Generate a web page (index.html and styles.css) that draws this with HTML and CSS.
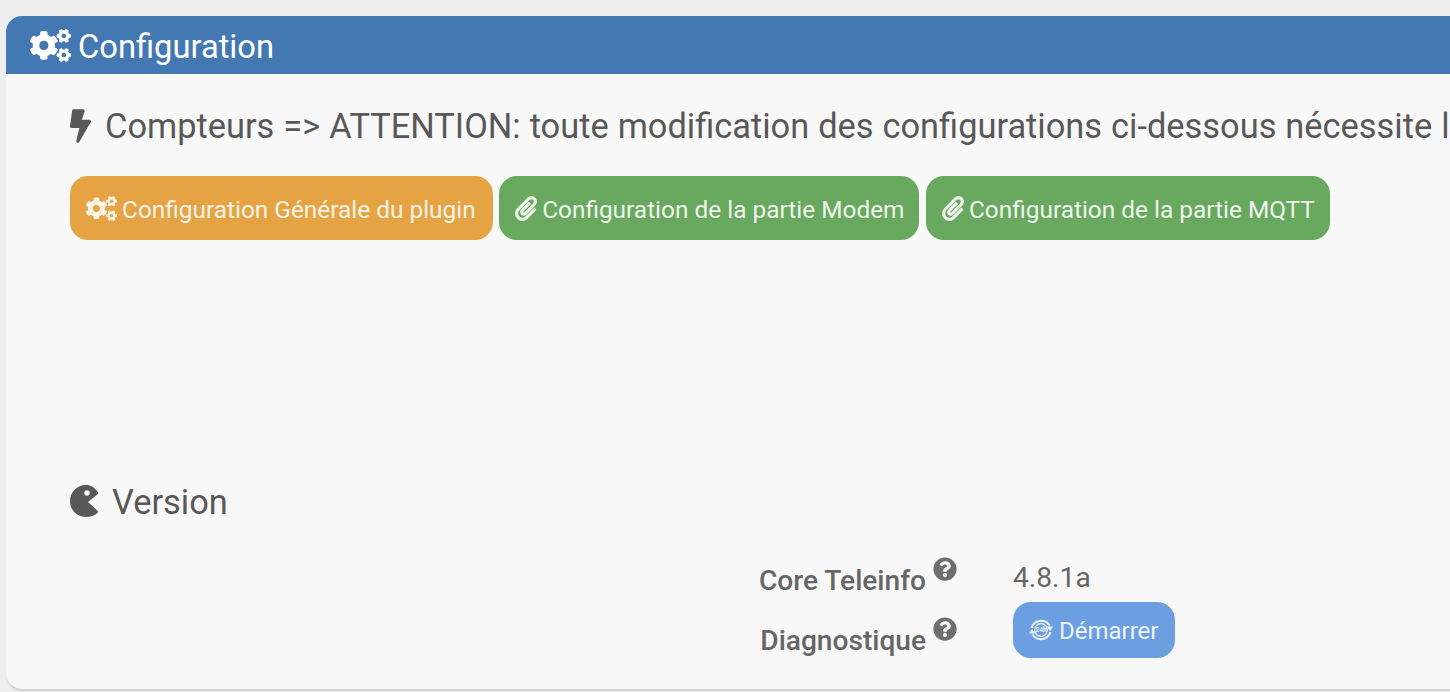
FILE: index.html
```html
<!DOCTYPE html>
<html lang="fr">
<head>
<meta charset="utf-8">
<title>Configuration</title>
<link rel="stylesheet" href="styles.css">
</head>
<body>
<svg class="defs" aria-hidden="true">
<symbol id="cogs" viewBox="0 0 640 512"><path d="M512.1 191l-8.2 14.3c-3 5.3-9.4 7.5-15.1 5.4-11.8-4.4-22.6-10.7-32.1-18.6-4.6-3.8-5.8-10.5-2.8-15.7l8.2-14.3c-6.9-8-12.3-17.3-15.9-27.4h-16.5c-6 0-11.2-4.3-12.2-10.3-2-12-2.1-24.6 0-37.1 1-6 6.2-10.4 12.2-10.4h16.5c3.6-10.1 9-19.4 15.9-27.4l-8.2-14.3c-3-5.2-1.9-11.9 2.8-15.7 9.5-7.9 20.4-14.2 32.1-18.6 5.7-2.1 12.1.1 15.1 5.4l8.2 14.3c10.5-1.9 21.2-1.9 31.7 0L552 6.3c3-5.3 9.4-7.5 15.1-5.4 11.8 4.4 22.6 10.7 32.1 18.6 4.6 3.8 5.8 10.5 2.8 15.7l-8.2 14.3c6.9 8 12.3 17.3 15.9 27.4h16.5c6 0 11.2 4.3 12.2 10.3 2 12 2.1 24.6 0 37.1-1 6-6.2 10.4-12.2 10.4h-16.5c-3.6 10.1-9 19.4-15.9 27.4l8.2 14.3c3 5.2 1.9 11.9-2.8 15.7-9.5 7.9-20.4 14.2-32.1 18.6-5.7 2.1-12.1-.1-15.1-5.4l-8.2-14.3c-10.4 1.9-21.2 1.9-31.7 0zm-10.5-58.8c38.5 29.6 82.4-14.3 52.8-52.8-38.5-29.7-82.4 14.3-52.8 52.8zM386.3 286.1l33.7 16.8c10.1 5.8 14.5 18.1 10.5 29.1-8.9 24.2-26.4 46.4-42.6 65.8-7.4 8.9-20.2 11.1-30.3 5.3l-29.1-16.8c-16 13.7-34.6 24.6-54.9 31.7v33.6c0 11.6-8.3 21.6-19.7 23.6-24.6 4.2-50.4 4.4-75.9 0-11.5-2-20-11.9-20-23.6V418c-20.3-7.2-38.9-18-54.9-31.7L74 403c-10 5.8-22.9 3.6-30.3-5.3-16.2-19.4-33.3-41.6-42.2-65.7-4-10.9.4-23.2 10.5-29.1l33.3-16.8c-3.9-20.9-3.9-42.4 0-63.4L12 205.8c-10.1-5.8-14.6-18.1-10.5-29 8.9-24.2 26-46.4 42.2-65.8 7.4-8.9 20.2-11.1 30.3-5.3l29.1 16.8c16-13.7 34.6-24.6 54.9-31.7V57.1c0-11.5 8.2-21.5 19.6-23.5 24.6-4.2 50.5-4.4 76-.1 11.5 2 20 11.9 20 23.6v33.6c20.3 7.2 38.9 18 54.9 31.7l29.1-16.8c10-5.8 22.9-3.6 30.3 5.3 16.2 19.4 33.2 41.6 42.1 65.8 4 10.9.1 23.2-10 29.1l-33.7 16.8c3.9 21 3.9 42.5 0 63.5zm-117.6 21.1c59.2-77-28.7-164.9-105.7-105.7-59.2 77 28.7 164.9 105.7 105.7zm243.4 182.7l-8.2 14.3c-3 5.3-9.4 7.5-15.1 5.4-11.8-4.4-22.6-10.7-32.1-18.6-4.6-3.8-5.8-10.5-2.8-15.7l8.2-14.3c-6.9-8-12.3-17.3-15.9-27.4h-16.5c-6 0-11.2-4.3-12.2-10.3-2-12-2.1-24.6 0-37.1 1-6 6.2-10.4 12.2-10.4h16.5c3.6-10.1 9-19.4 15.9-27.4l-8.2-14.3c-3-5.2-1.9-11.9 2.8-15.7 9.5-7.9 20.4-14.2 32.1-18.6 5.7-2.1 12.1.1 15.1 5.4l8.2 14.3c10.5-1.9 21.2-1.9 31.7 0l8.2-14.3c3-5.3 9.4-7.5 15.1-5.4 11.8 4.4 22.6 10.7 32.1 18.6 4.6 3.8 5.8 10.5 2.8 15.7l-8.2 14.3c6.9 8 12.3 17.3 15.9 27.4h16.5c6 0 11.2 4.3 12.2 10.3 2 12 2.1 24.6 0 37.1-1 6-6.2 10.4-12.2 10.4h-16.5c-3.6 10.1-9 19.4-15.9 27.4l8.2 14.3c3 5.2 1.9 11.9-2.8 15.7-9.5 7.9-20.4 14.2-32.1 18.6-5.7 2.1-12.1-.1-15.1-5.4l-8.2-14.3c-10.4 1.9-21.2 1.9-31.7 0zM501.6 431c38.5 29.6 82.4-14.3 52.8-52.8-38.5-29.6-82.4 14.3-52.8 52.8z"/></symbol>
<symbol id="clip" viewBox="0 0 448 512"><path d="M43.246 466.142c-58.43-60.289-57.341-157.511 1.386-217.581L254.392 34c44.316-45.332 116.351-45.336 160.671 0 43.89 44.894 43.943 117.329 0 162.276L232.214 383.128c-29.855 30.537-78.633 30.111-107.982-.998-28.275-29.97-27.368-77.473 1.452-106.953l143.743-146.835c6.182-6.314 16.312-6.422 22.626-.241l22.861 22.379c6.315 6.182 6.422 16.312.241 22.626L171.427 319.927c-4.932 5.045-5.236 13.428-.648 18.292 4.372 4.634 11.245 4.711 15.688.165l182.849-186.851c19.613-20.062 19.613-52.725-.011-72.798-19.189-19.627-49.957-19.637-69.154 0L90.39 293.295c-34.763 35.56-35.299 93.12-1.191 128.313 34.01 35.093 88.985 35.137 123.058.286l172.06-175.999c6.177-6.319 16.307-6.433 22.626-.256l22.877 22.364c6.319 6.177 6.434 16.307.256 22.626l-172.06 175.998c-59.576 60.938-155.943 60.216-214.77-.485z"/></symbol>
<symbol id="help" viewBox="0 0 512 512"><path d="M504 256c0 136.997-111.043 248-248 248S8 392.997 8 256C8 119.083 119.043 8 256 8s248 111.083 248 248zM262.655 90c-54.497 0-89.255 22.957-116.549 63.758-3.536 5.286-2.353 12.415 2.715 16.258l34.699 26.31c5.205 3.947 12.621 3.008 16.665-2.122 17.864-22.658 30.113-35.797 57.303-35.797 20.429 0 45.698 13.148 45.698 32.958 0 14.976-12.363 22.667-32.534 33.976C247.128 238.528 216 254.941 216 296v4c0 6.627 5.373 12 12 12h56c6.627 0 12-5.373 12-12v-1.333c0-28.462 83.186-29.647 83.186-106.667 0-58.002-60.165-102-116.531-102zM256 338c-25.365 0-46 20.635-46 46 0 25.364 20.635 46 46 46s46-20.636 46-46c0-25.365-20.635-46-46-46z"/></symbol>
</svg>
<main class="panel">
  <header class="panel-head">
    <svg class="ico-head"><use href="#cogs"/></svg>
    <span>Configuration</span>
  </header>
  <div class="panel-body">
    <h2 class="legend">
      <svg class="ico-bolt" viewBox="0 0 320 512"><path d="M296 160H180.6l42.6-129.8C227.2 15 215.7 0 200 0H56C44 0 33.8 8.9 32.2 20.8l-32 240C-1.7 275.2 9.5 288 24 288h118.7L96.6 482.5c-3.6 15.2 8 29.5 23.3 29.5 8.4 0 16.4-4.4 20.800-12l176-304c9.3-15.9-2.2-36-20.7-36z"/></svg>
      <span>Compteurs =&gt; ATTENTION: toute modification des configurations ci-dessous nécessite le redémarrage du démon</span>
    </h2>
    <div class="btn-row">
      <a class="btn btn-orange"><svg class="ico-cogs"><use href="#cogs"/></svg>Configuration Générale du plugin</a>
      <a class="btn btn-green"><svg class="ico-clip"><use href="#clip"/></svg>Configuration de la partie Modem</a>
      <a class="btn btn-green"><svg class="ico-clip"><use href="#clip"/></svg>Configuration de la partie MQTT</a>
    </div>
    <h2 class="legend legend-version">
      <svg class="ico-pac" viewBox="0 0 30 34"><path fill-rule="evenodd" d="M16 1C7 1 0 8 0 17s7 16 16 16c4.500 0 8.500-1.300 11.500-4 .8-.8.700-1.700 0-2.300L18 18l9.300-7.600c1-.9 1-1.800.3-2.700C24.500 3.500 21 1 16 1zM17 6.300a2.700 2.700 0 1 1 0 5.400 2.700 2.700 0 0 1 0-5.400z"/></svg>
      <span>Version</span>
    </h2>
    <div class="form-grid">
      <label class="form-label">Core Teleinfo<svg class="ico-help"><use href="#help"/></svg></label>
      <div class="form-value">4.8.1a</div>
      <label class="form-label form-label-two">Diagnostique<svg class="ico-help"><use href="#help"/></svg></label>
      <div class="form-action"><a class="btn btn-blue"><svg class="ico-24" viewBox="0 0 24 24"><g fill="none" stroke="currentColor"><circle cx="12" cy="12" r="6.300" stroke-width="1.200"/><path stroke-width="2" d="M2.500 10A10 10 0 0 1 20.500 7.500"/><path stroke-width="2" d="M21.500 14A10 10 0 0 1 3.500 16.500"/></g><path fill="currentColor" d="M17.500 8.500H24L21 13zM6.500 15.500H0L3 11z"/><text x="12" y="14.300" text-anchor="middle" class="ico-24-text">24h</text></svg>Démarrer</a></div>
    </div>
  </div>
</main>
</body>
</html>
```
FILE: styles.css
```css
html, body {
  margin: 0;
  height: 692px;
  overflow: hidden;
  background: #eeeeee;
}
body {
  padding: 16px 0 0 6px;
  box-sizing: border-box;
  font-family: Roboto, "Liberation Sans", sans-serif;
  color: #585858;
}
.defs {
  display: none;
}
svg {
  fill: currentColor;
  flex: none;
}
.panel {
  width: 1800px;
  height: 673px;
  background: #f8f8f8;
  border-radius: 16px;
  box-shadow: 0 3px 2px -1px #cccccc;
  overflow: hidden;
}
.panel-head {
  height: 58px;
  box-sizing: border-box;
  background: #4478b2;
  color: #ffffff;
  display: flex;
  align-items: center;
  padding: 0 0 0 24px;
  font-size: 32.700px;
  gap: 7px;
}
.panel-head span {
  padding-top: 4px;
}
.ico-head {
  width: 41px;
  height: 33px;
}
.panel-body {
  padding: 30px 0 0 64px;
}
.legend {
  margin: 0;
  display: flex;
  align-items: center;
  font-size: 34.400px;
  font-weight: 400;
  word-spacing: 0.450px;
  white-space: nowrap;
  line-height: 44px;
}
.ico-bolt {
  width: 21px;
  height: 34px;
  margin: 0 14px 0 0;
}
.btn-row {
  display: flex;
  gap: 6.500px;
  margin-top: 28px;
}
.btn {
  display: inline-flex;
  align-items: center;
  height: 64px;
  padding: 3px 16px 0;
  border-radius: 18px;
  color: #ffffff;
  font-size: 24.400px;
  white-space: nowrap;
  box-sizing: border-box;
}
.btn-orange {
  background: #e6a344;
  color: #fbf3e6;
  padding-right: 17px;
}
.btn-green {
  background: #69a85f;
  color: #eef5ec;
  padding-right: 15px;
}
.btn-blue {
  background: #6c9fe1;
  color: #eef4fc;
  height: 56px;
  font-size: 24px;
  padding: 2px 17px 0 16px;
}
.ico-cogs {
  width: 31px;
  height: 25px;
  margin: -3px 5px 0 0;
}
.ico-clip {
  width: 22px;
  height: 25px;
  margin: -3px 5px 0 0;
}
.legend-version {
  margin-top: 240px;
}
.ico-pac {
  width: 30px;
  height: 34px;
  margin: -2px 12px 0 0;
}
.form-grid {
  display: grid;
  grid-template-columns: 951px auto;
  column-gap: 56px;
  margin-left: -64px;
  padding-top: 33px;
}
.form-label {
  text-align: right;
  font-size: 28.100px;
  font-weight: 500;
  color: #666666;
  line-height: 40px;
}
.form-label-two {
  padding-top: 16px;
}
.form-value {
  font-size: 28.200px;
  color: #666666;
  line-height: 42px;
}
.form-action {
  display: flex;
  padding-top: 1px;
}
.ico-help {
  width: 24px;
  height: 24px;
  margin-left: 7px;
  vertical-align: 9px;
  color: #6e6e6e;
}
.ico-24 {
  width: 24px;
  height: 24px;
  margin: -2px 6px 0 0;
}
.ico-24-text {
  font-size: 6.500px;
  font-weight: 700;
  font-family: Roboto, sans-serif;
}
```
